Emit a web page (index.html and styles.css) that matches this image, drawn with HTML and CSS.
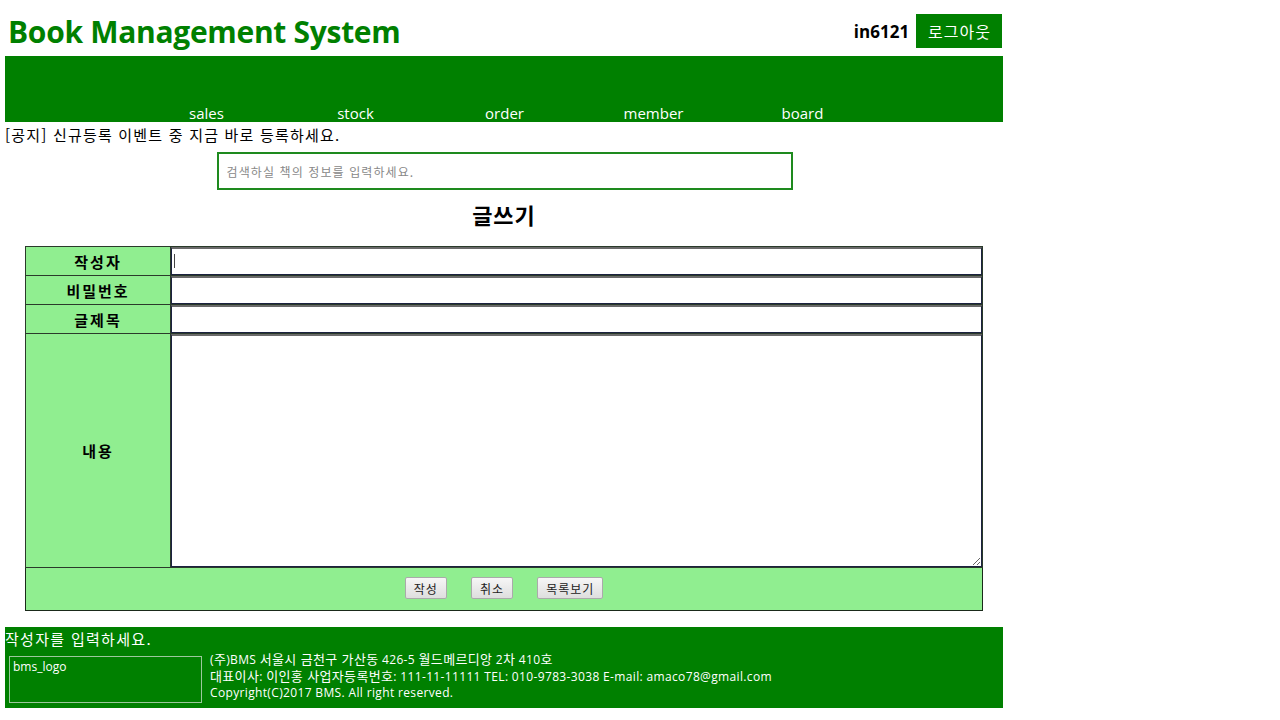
FILE: index.html
```html
<!DOCTYPE html>
<html lang="ko">
<head>
<meta charset="utf-8">
<title>Book Management System</title>
<link rel="stylesheet" href="styles.css">
</head>
<body>
<div class="wrap">
  <header class="top">
    <h1 class="title">Book Management System</h1>
    <div class="user">
      <span class="user-id">in6121</span>
      <a class="logout" href="#">로그아웃</a>
    </div>
  </header>
  <nav class="menu">
    <ul class="menu-list">
      <li><a href="#">sales</a></li>
      <li><a href="#">stock</a></li>
      <li><a href="#">order</a></li>
      <li><a href="#">member</a></li>
      <li><a href="#">board</a></li>
    </ul>
  </nav>
  <p class="notice">[공지] 신규등록 이벤트 중 지금 바로 등록하세요.</p>
  <div class="search">
    <input class="search-input" type="text" placeholder="검색하실 책의 정보를 입력하세요.">
  </div>
  <h2 class="page-title">글쓰기</h2>
  <table class="write">
    <tr class="row">
      <th class="label">작성자</th>
      <td class="field"><input class="inp" type="text"><span class="caret"></span></td>
    </tr>
    <tr class="row">
      <th class="label">비밀번호</th>
      <td class="field"><input class="inp" type="password"></td>
    </tr>
    <tr class="row">
      <th class="label">글제목</th>
      <td class="field"><input class="inp" type="text"></td>
    </tr>
    <tr class="row-content">
      <th class="label">내용</th>
      <td class="field"><textarea class="area"></textarea></td>
    </tr>
    <tr class="row-buttons">
      <td class="buttons" colspan="2">
        <button class="btn" type="button">작성</button>
        <button class="btn" type="button">취소</button>
        <button class="btn" type="button">목록보기</button>
      </td>
    </tr>
  </table>
  <footer class="foot">
    <div class="foot-msg">작성자를 입력하세요.</div>
    <div class="foot-body">
      <div class="logo">bms_logo</div>
      <div class="address">
        <div>(<span class="ko">주</span>)BMS <span class="ko">서울시 금천구 가산동</span> 426-5 <span class="ko">월드메르디앙</span> 2<span class="ko">차</span> 410<span class="ko">호</span></div>
        <div><span class="ko">대표이사</span>: <span class="ko">이인홍 사업자등록번호</span>: 111-11-11111 TEL: 010-9783-3038 E-mail: amaco78@gmail.com</div>
        <div>Copyright(C)2017 BMS. All right reserved.</div>
      </div>
    </div>
  </footer>
</div>
</body>
</html>
```

FILE: styles.css
```css
* { box-sizing: border-box; }
html, body { margin: 0; padding: 0; background: #fff; }
body {
  font-family: "Open Sans", "Noto Sans CJK KR", sans-serif;
  color: #000;
}
.wrap {
  width: 998px;
  margin-left: 5px;
}
.top {
  height: 56px;
  display: flex;
  justify-content: space-between;
  align-items: flex-start;
}
.title {
  margin: 0;
  padding: 12px 0 0 3px;
  font-size: 30px;
  line-height: 40px;
  font-weight: 700;
  color: #008000;
  letter-spacing: -0.3px;
}
.user {
  display: flex;
  align-items: center;
  margin-top: 14px;
  height: 34px;
}
.user-id {
  font-weight: 700;
  font-size: 17px;
  margin-right: 7px;
}
.logout {
  display: block;
  background: #008000;
  color: #fff;
  text-decoration: none;
  font-family: "Noto Sans CJK KR", sans-serif;
  font-size: 16px;
  letter-spacing: 1px;
  height: 34px;
  line-height: 34px;
  padding: 0 11px 0 12px;
  margin-right: 1px;
}
.menu {
  background: #008000;
  height: 66px;
  display: flex;
  align-items: flex-end;
}
.menu-list {
  list-style: none;
  margin: 0;
  padding: 0 0 0 127px;
  display: flex;
}
.menu-list li {
  width: 149px;
  text-align: center;
}
.menu-list a {
  color: #fff;
  text-decoration: none;
  font-size: 15px;
  line-height: 18px;
  display: block;
}
.notice {
  margin: 0;
  padding-top: 3px;
  font-family: "Noto Sans CJK KR", sans-serif;
  font-size: 15px;
  letter-spacing: 1.2px;
  line-height: 20px;
  height: 30px;
}
.search {
  display: flex;
  justify-content: center;
  padding-left: 1px;
}
.search-input {
  width: 576px;
  height: 38px;
  border: 2px solid #1e8a1e;
  padding: 0 8px;
  font-family: "Noto Sans CJK KR", sans-serif;
  font-size: 12px;
  letter-spacing: 1.1px;
  outline: none;
}
.search-input::placeholder { color: #888; }
.page-title {
  margin: 10px 0 0;
  text-align: center;
  font-family: "Noto Sans CJK KR", sans-serif;
  font-size: 22px;
  letter-spacing: 1px;
  line-height: 28px;
  font-weight: 700;
  height: 46px;
}
.write {
  width: 958px;
  margin: 0 auto;
  border-collapse: collapse;
  border: 1px solid #1a2a1a;
}
.label {
  width: 145px;
  background: #90ee90;
  border: 1px solid #2a3a2a;
  font-family: "Noto Sans CJK KR", sans-serif;
  font-size: 15px;
  letter-spacing: 2px;
  font-weight: 700;
  text-align: center;
  padding: 0;
}
.row .label { height: 29px; }
.row-content .label { height: 234px; }
.field {
  padding: 0;
  border: 1px solid #2a3a2a;
  position: relative;
}
.inp {
  display: block;
  width: 100%;
  height: 28px;
  border: 1px solid #1c2240;
  border-top-width: 2px;
  border-top-color: #6a6a6a;
  margin: 0;
  outline: none;
}
.caret {
  position: absolute;
  left: 3px;
  top: 7px;
  width: 1px;
  height: 14px;
  background: #444;
}
.area {
  display: block;
  width: 100%;
  height: 233px;
  border: 1px solid #1c2240;
  border-top: 2px solid #6a6a6a;
  margin: 0;
  resize: both;
  outline: none;
}
.buttons {
  background: #90ee90;
  height: 43px;
  text-align: center;
  border: 1px solid #1a2a1a;
  padding: 0 0 2px 0;
}
.btn {
  font-family: "Noto Sans CJK KR", sans-serif;
  font-size: 12px;
  letter-spacing: 1px;
  height: 22px;
  padding: 0 8px;
  margin: 0 10px;
  background: linear-gradient(#f6f6f6, #dedede);
  border: 1px solid #aaa;
  border-radius: 2px;
  color: #222;
}
.foot {
  margin-top: 16px;
  background: #008000;
  height: 81px;
  color: #fff;
}
.foot-msg {
  font-family: "Noto Sans CJK KR", sans-serif;
  font-size: 15px;
  letter-spacing: 1.3px;
  line-height: 22px;
  padding-top: 1px;
  height: 29px;
}
.foot-body {
  display: flex;
  align-items: flex-start;
  padding-left: 4px;
}
.logo {
  width: 193px;
  height: 47px;
  border: 1px solid #9cc89c;
  font-size: 12px;
  line-height: 18px;
  padding: 1px 0 0 3px;
  font-family: "Open Sans", sans-serif;
}
.address {
  margin-top: -5px;
  padding: 0 0 0 8px;
  font-size: 12px;
  letter-spacing: 0.35px;
  line-height: 16px;
  font-family: "Open Sans", "Noto Sans CJK KR", sans-serif;
}
.ko {
  font-family: "Noto Sans CJK KR", sans-serif;
  font-size: 13px;
}
```
